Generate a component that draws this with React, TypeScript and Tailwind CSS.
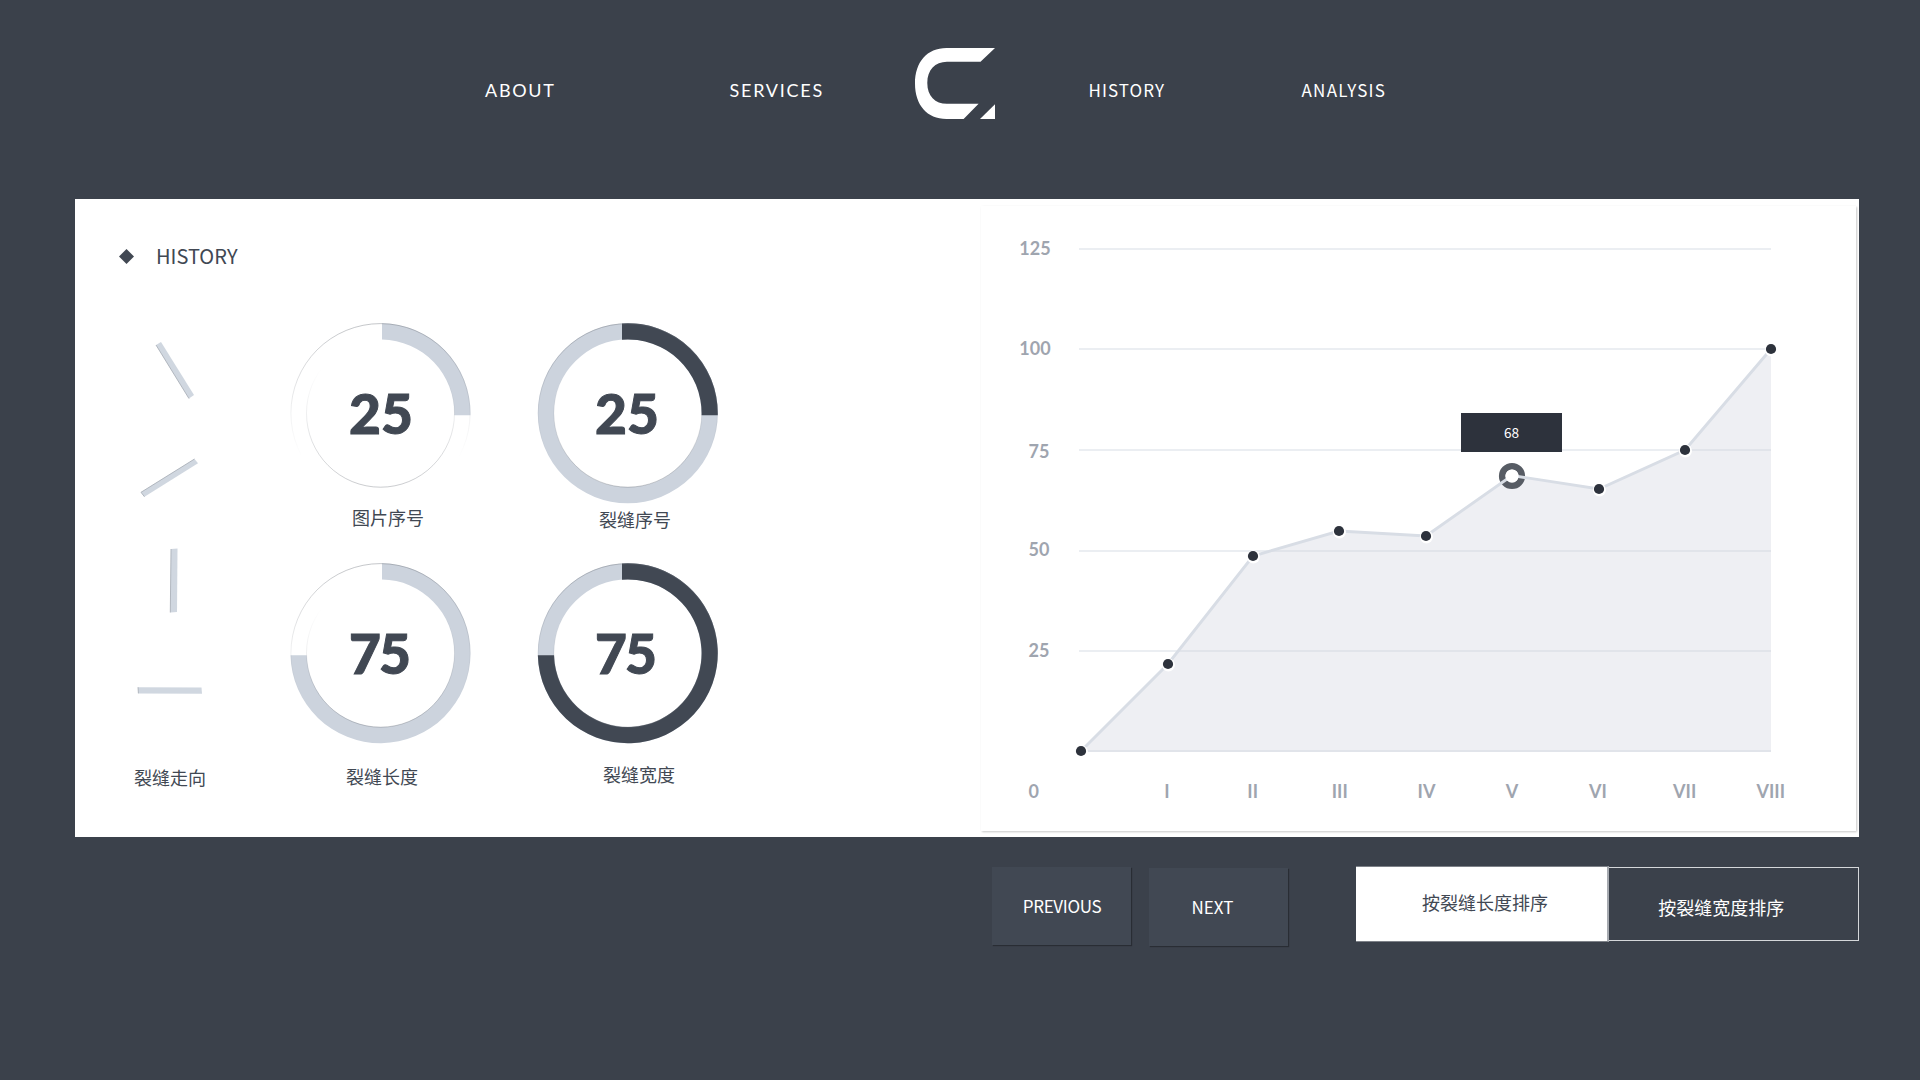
import React from "react";

const CJK = "font-['Noto_Sans_CJK_SC',sans-serif]";

type GaugeProps = {
  id: string;
  value: number;
  cx: number;
  start: number;
  arc: string;
  track: string | null;
  numberClass: string;
  label: string;
  labelClass: string;
};

/** Annular sector running clockwise from the top of the ring. */
function sector(cx: number, cy: number, x0: number, y1: number, three: boolean) {
  const R = 90;
  const r = 73.8;
  const at = (rad: number, d: number) => Math.sqrt(rad * rad - d * d);
  const dx = x0 - cx;
  const dy = y1 - cy;
  const side = three ? -1 : 1;
  const large = three ? 1 : 0;
  return [
    `M${x0} ${cy - at(R, dx)}`,
    `A${R} ${R} 0 ${large} 1 ${cx + side * at(R, dy)} ${y1}`,
    `L${cx + side * at(r, dy)} ${y1}`,
    `A${r} ${r} 0 ${large} 0 ${x0} ${cy - at(r, dx)}`,
    "Z",
  ].join(" ");
}

function Gauge({ id, value, cx, start, arc, track, numberClass, label, labelClass }: GaugeProps) {
  const cy = 92.2;
  return (
    <figure className="h-[240px] w-[184px]">
      <div className="grid">
        <svg className="col-start-1 row-start-1" width="184" height="184" viewBox="0 0 184 184">
          <defs>
            <linearGradient id={`${id}-top`} x1="0" y1="0" x2="0" y2="1">
              <stop offset="0" stopColor="#6b7078" stopOpacity="0.5" />
              <stop offset="0.5" stopColor="#6b7078" stopOpacity="0.12" />
              <stop offset="0.75" stopColor="#6b7078" stopOpacity="0" />
            </linearGradient>
            <linearGradient id={`${id}-bottom`} x1="0" y1="0" x2="0" y2="1">
              <stop offset="0.2" stopColor="#6b7078" stopOpacity="0" />
              <stop offset="0.5" stopColor="#6b7078" stopOpacity="0.14" />
              <stop offset="1" stopColor="#6b7078" stopOpacity="0.45" />
            </linearGradient>
          </defs>
          {track && <circle cx={cx} cy={cy} r="81.9" fill="none" stroke={track} strokeWidth="16.2" />}
          <path d={sector(cx, cy, start, 94.3, value > 50)} fill={arc} />
          <circle cx={cx} cy={cy} r="89.6" fill="none" stroke={`url(#${id}-top)`} strokeWidth="0.8" />
          <circle cx={cx} cy={cy} r="74" fill="none" stroke={`url(#${id}-bottom)`} strokeWidth="0.8" />
        </svg>
        <div
          className={`col-start-1 row-start-1 self-center pb-[1px] font-['Lato',sans-serif] text-[55px] leading-[56px] font-black text-[#414853] [-webkit-text-stroke:1px_#414853] ${numberClass}`}
        >
          {value}
        </div>
      </div>
      <figcaption className={`text-[18px] leading-[20px] whitespace-nowrap text-[#414853] ${CJK} ${labelClass}`}>
        {label}
      </figcaption>
    </figure>
  );
}

const gauges: GaugeProps[] = [
  { id: "g1", value: 25, cx: 92.5, start: 94, arc: "#ccd3dd", track: null, numberClass: "ml-[61px]", label: "图片序号", labelClass: "mt-[2px] ml-[64px]" },
  { id: "g2", value: 25, cx: 91.8, start: 86, arc: "#414853", track: "#ccd3dd", numberClass: "ml-[59px]", label: "裂缝序号", labelClass: "mt-[4px] ml-[63px]" },
  { id: "g3", value: 75, cx: 92.5, start: 94, arc: "#ccd3dd", track: null, numberClass: "ml-[61px] tracking-[-2px]", label: "裂缝长度", labelClass: "mt-[21px] ml-[58px]" },
  { id: "g4", value: 75, cx: 91.8, start: 86, arc: "#414853", track: "#ccd3dd", numberClass: "ml-[59px] tracking-[-2px]", label: "裂缝宽度", labelClass: "mt-[19px] ml-[67px]" },
];

function Directions() {
  const sticks = [
    "33,24 38,21 71,74 66,77.6",
    "18,171.3 71.5,138 75,142.3 21.5,175.8",
    "48,228 54.5,227.5 54,291 47.3,291.5",
    "15,366.2 78.5,366.5 79,372.8 15.4,372.4",
  ];
  const edges = ["M33 24L66 77.6", "M21.5 175.8L18 171.3L71.5 138", "M48 228L47.3 291.5", "M15.4 372.4L15 366.2"];
  return (
    <figure className="w-[165px]">
      <svg width="165" height="446" viewBox="0 0 165 446">
        {sticks.map((p) => (
          <polygon key={p} points={p} fill="#d0d7e0" />
        ))}
        {edges.map((d) => (
          <path key={d} d={d} fill="none" stroke="#a3a9b2" strokeWidth="0.8" />
        ))}
      </svg>
      <figcaption className={`ml-[11px] text-[18px] leading-[20px] text-[#414853] ${CJK}`}>裂缝走向</figcaption>
    </figure>
  );
}

const points: [number, number][] = [
  [1081, 751], [1168, 664], [1253, 556], [1339, 531], [1426, 536], [1512, 475.5], [1599, 489], [1685, 450], [1771, 349],
];
const yAxis: [string, number, number][] = [
  ["125", 1035, 255], ["100", 1035, 355], ["75", 1039, 458], ["50", 1039, 556], ["25", 1039, 657], ["0", 1033.7, 798],
];
const xAxis: [string, number][] = [
  ["I", 1167], ["II", 1252.7], ["III", 1339.8], ["IV", 1426.5], ["V", 1512], ["VI", 1598], ["VII", 1684.7], ["VIII", 1770.8],
];

function HistoryChart() {
  const line = points.map(([x, y]) => `${x},${y}`).join(" ");
  return (
    <svg width="875" height="625" viewBox="981 206 875 625">
      {[249, 349, 450, 551, 651, 751].map((y) => (
        <line key={y} x1="1079" x2="1771" y1={y} y2={y} stroke="#ebeef2" strokeWidth="2" />
      ))}
      <polygon points={`1081,752 ${line} 1771,752`} fill="#cfd1dd" fillOpacity="0.35" />
      <circle cx="1512" cy="476" r="9.8" fill="none" stroke="#575c64" strokeWidth="6.6" />
      <polyline points={line} fill="none" stroke="#d8dde5" strokeWidth="2.9" />
      {points.map(([x, y]) =>
        x === 1512 ? (
          <circle key={x} cx={x} cy={y + 0.5} r="6.6" fill="#fff" />
        ) : (
          <g key={x}>
            <circle cx={x + 0.4} cy={y + 0.8} r="6.6" fill="#fff" />
            <circle cx={x} cy={y} r="5.1" fill="#2d323c" />
          </g>
        ),
      )}
      <rect x="1461" y="413" width="101" height="39" fill="#2d323c" />
      <text x="1511.5" y="438.4" textAnchor="middle" fontSize="13.6" fill="#fff" className={CJK}>
        68
      </text>
      <g className="font-['Lato',sans-serif]" fontSize="18" fontWeight="700" fill="#9fa5af" textAnchor="middle">
        {yAxis.map(([t, x, y]) => (
          <text key={t} x={x} y={y}>
            {t}
          </text>
        ))}
        {xAxis.map(([t, x]) => (
          <text key={t} x={x} y="798">
            {t}
          </text>
        ))}
      </g>
    </svg>
  );
}

function Logo() {
  return (
    <svg className="mt-[48px] block" width="80" height="71" viewBox="0 0 80 71">
      <path
        d="M80 0H31.5C12 0 0 14 0 35.5S12 71 31.5 71H48.6L63.6 55.8H32C20 55.8 12.3 48 12.3 35S20 13.8 32 13.8H65.5Z"
        fill="#fff"
      />
      <path d="M80 56.3V71H65Z" fill="#fff" />
    </svg>
  );
}

export default function App() {
  return (
    <div className="h-[1080px] w-[1920px] overflow-hidden bg-[#3b414b]">
      <header className="flex h-[199px] pl-[485px] text-[18px] leading-[20px] text-white">
        <a className="mt-[80px] w-[244.5px] font-['Lato',sans-serif] tracking-[1.7px]">ABOUT</a>
        <a className="mt-[80px] w-[185.5px] font-['Lato',sans-serif] tracking-[1.75px]">SERVICES</a>
        <Logo />
        <a className={`mt-[80px] ml-[93.5px] w-[213px] text-[17px] tracking-[1.05px] ${CJK}`}>HISTORY</a>
        <a className={`mt-[80px] text-[17px] tracking-[1.25px] ${CJK}`}>ANALYSIS</a>
      </header>

      <main className="ml-[75px] flex h-[638px] w-[1784px] bg-white">
        <section className="w-[906px] pt-[45px] pl-[44px]">
          <h1 className={`flex h-[25px] items-center text-[20px] leading-[24px] text-[#414853] ${CJK}`}>
            <svg className="mr-[22px]" width="15" height="15" viewBox="0 0 15 15">
              <path d="M7.5 0L15 7.5L7.5 15L0 7.5Z" fill="#414853" />
            </svg>
            <span className="pb-[2px]">HISTORY</span>
          </h1>
          <div className="mt-[52px] ml-[4px] flex">
            <Directions />
            <div className="grid grid-cols-[184px_184px] gap-x-[64px]">
              {gauges.map((g) => (
                <Gauge key={g.id} {...g} />
              ))}
            </div>
          </div>
        </section>
        <section className="mt-[7px] h-[625px] w-[875px] bg-white shadow-[1px_1px_2px_rgba(0,0,0,0.22)]">
          <HistoryChart />
        </section>
      </main>

      <footer className="mt-[29px] flex items-start pl-[992px] text-white">
        <button
          className={`mt-px h-[78px] w-[139px] bg-[#414853] pl-[1px] text-[17px] leading-[20px] tracking-[-0.35px] shadow-[1px_1px_1px_rgba(0,0,0,0.3)] ${CJK}`}
        >
          PREVIOUS
        </button>
        <button
          className={`mt-[2px] ml-[18px] h-[78px] w-[139px] bg-[#414853] pr-[12px] text-[17px] leading-[20px] shadow-[1px_1px_1px_rgba(0,0,0,0.3)] ${CJK}`}
        >
          NEXT
        </button>
        <div className={`ml-[67.5px] flex h-[76px] w-[503.5px] text-[18px] leading-[20px] ${CJK}`}>
          <button className="w-[253px] border-y border-r-2 border-y-[#7d8188] border-r-[#a6aab0] bg-white pb-[5px] pl-[8px] text-[#414853]">
            按裂缝长度排序
          </button>
          <button className="mt-px mb-px flex-1 border border-l-0 border-[#d5d7da] pt-[5px] pr-[24px]">
            按裂缝宽度排序
          </button>
        </div>
      </footer>
    </div>
  );
}
